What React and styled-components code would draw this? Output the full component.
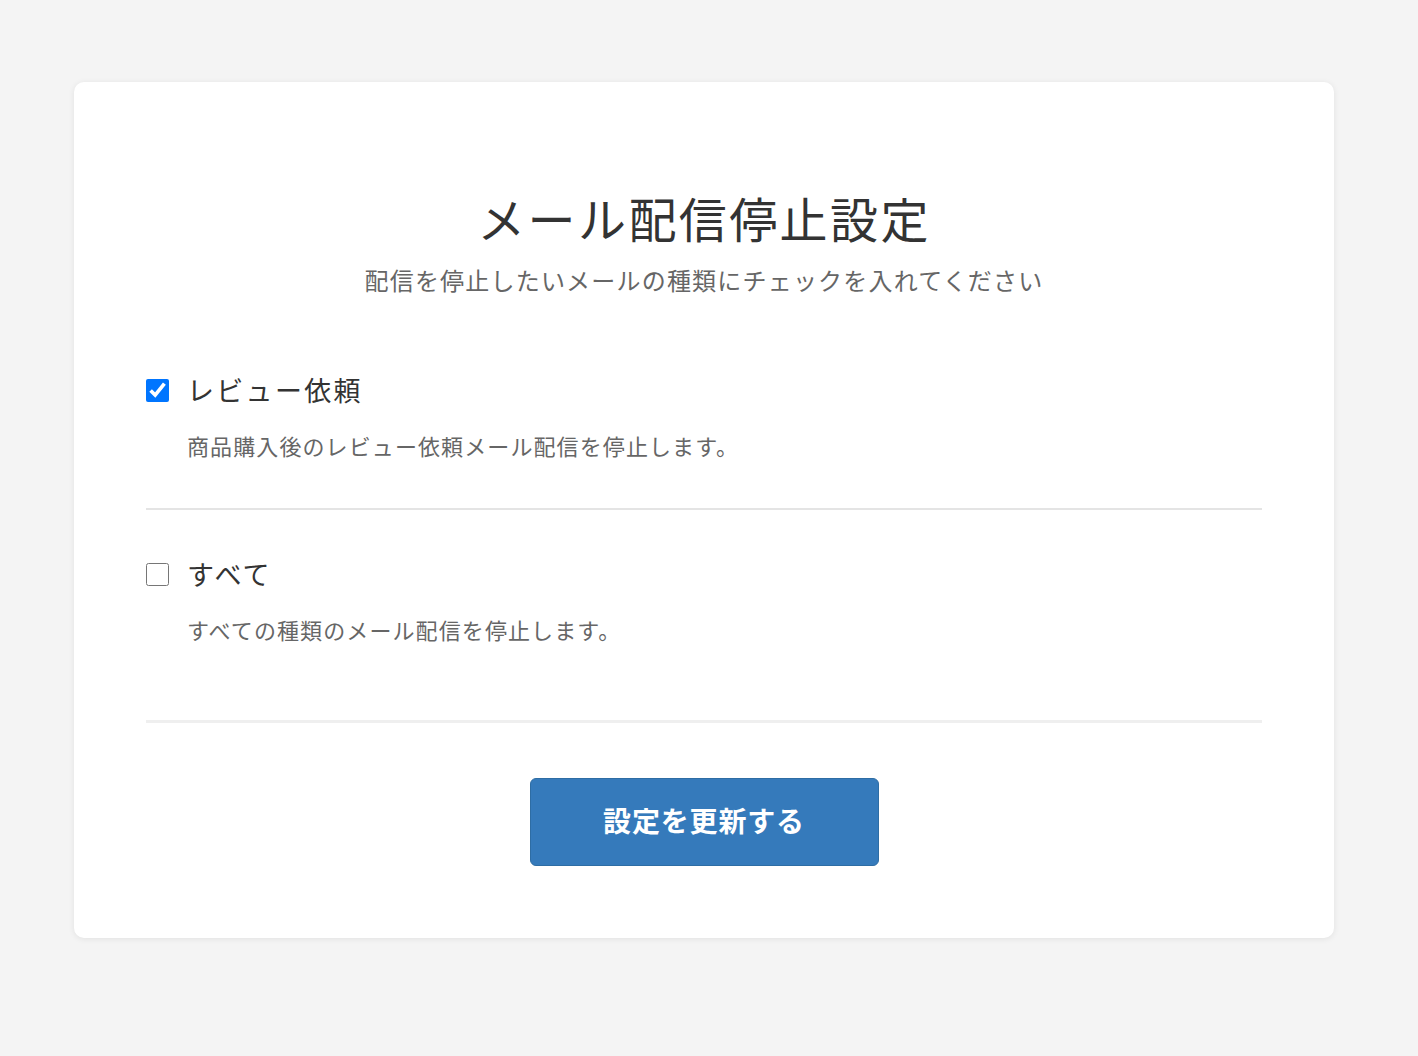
import React, { useState } from "react";
import styled, { createGlobalStyle } from "styled-components";

const GlobalStyle = createGlobalStyle`
  html, body {
    margin: 0;
    padding: 0;
    background: #f4f4f4;
    font-family: "Noto Sans CJK JP", "Noto Sans", sans-serif;
  }
`;

const Page = styled.div`
  padding: 82px 84px 80px 74px;
`;

const Card = styled.form`
  background: #fff;
  border-radius: 10px;
  box-shadow: 0 1px 6px rgba(0, 0, 0, 0.08);
  padding: 106px 72px 72px;
`;

const Title = styled.h1`
  margin: 0;
  font-size: 48px;
  line-height: 58px;
  font-weight: 400;
  color: #333;
  text-align: center;
  letter-spacing: 0.05em;
`;

const Subtitle = styled.p`
  margin: 16px 0 28px;
  font-size: 24px;
  line-height: 36px;
  color: #666;
  text-align: center;
  letter-spacing: 0.05em;
`;

const Option = styled.div`
  padding: 44px 0 45px;
  border-bottom: ${(props) => (props.last ? "none" : "2px solid #e4e4e4")};
  margin-bottom: ${(props) => (props.last ? "28px" : "0")};
`;

const OptionLabel = styled.label`
  display: flex;
  align-items: center;
  gap: 18px;
  font-size: 27px;
  line-height: 40px;
  color: #333;
  letter-spacing: 0.085em;
  cursor: pointer;
`;

const Check = styled.input`
  width: 23px;
  height: 23px;
  margin: 0;
  accent-color: #0075ff;
`;

const Description = styled.p`
  margin: 19px 0 2px 41px;
  font-size: 22px;
  line-height: 32px;
  color: #666;
  letter-spacing: 0.05em;
`;

const Footer = styled.div`
  border-top: 3px solid #efefef;
  padding-top: 55px;
  display: flex;
  justify-content: center;
`;

const SubmitButton = styled.button`
  width: 349px;
  height: 88px;
  padding: 0 0 4px;
  background: #357abb;
  border: 1px solid #2e6da4;
  border-radius: 6px;
  color: #fff;
  font-family: inherit;
  font-size: 28px;
  font-weight: 700;
  letter-spacing: 0.03em;
  cursor: pointer;
`;

const options = [
  {
    id: "review",
    label: "レビュー依頼",
    description: "商品購入後のレビュー依頼メール配信を停止します。",
  },
  {
    id: "all",
    label: "すべて",
    description: "すべての種類のメール配信を停止します。",
  },
];

export default function App() {
  const [checked, setChecked] = useState({ review: true, all: false });

  return (
    <Page>
      <GlobalStyle />
      <Card onSubmit={(e) => e.preventDefault()}>
        <Title>メール配信停止設定</Title>
        <Subtitle>配信を停止したいメールの種類にチェックを入れてください</Subtitle>
        {options.map((opt, i) => (
          <Option key={opt.id} last={i === options.length - 1}>
            <OptionLabel>
              <Check
                type="checkbox"
                checked={checked[opt.id]}
                onChange={() =>
                  setChecked({ ...checked, [opt.id]: !checked[opt.id] })
                }
              />
              {opt.label}
            </OptionLabel>
            <Description>{opt.description}</Description>
          </Option>
        ))}
        <Footer>
          <SubmitButton type="submit">設定を更新する</SubmitButton>
        </Footer>
      </Card>
    </Page>
  );
}
